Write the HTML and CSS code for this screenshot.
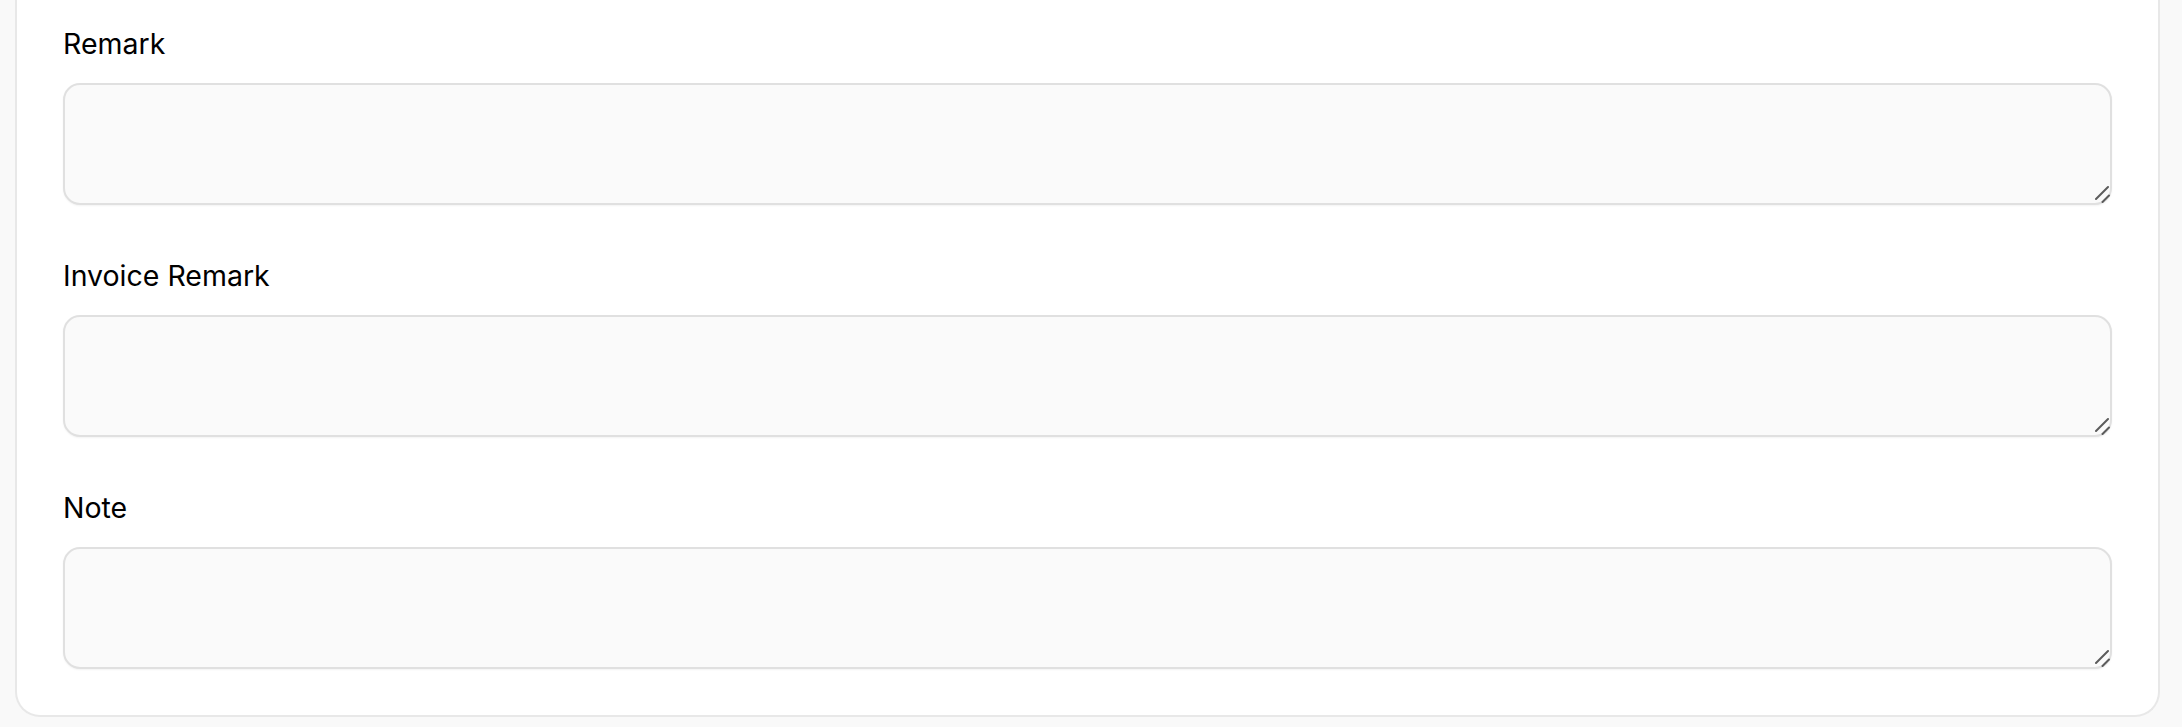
FILE: index.html
```html
<!DOCTYPE html>
<html lang="en">
<head>
<meta charset="utf-8">
<title>Remarks</title>
<link rel="stylesheet" href="styles.css">
</head>
<body>
<div class="card">
  <div class="field">
    <label class="field-label" for="remark">Remark</label>
    <div class="input-wrap">
      <textarea id="remark" class="field-input"></textarea>
      <svg class="grip" width="20" height="20" viewBox="0 0 20 20" aria-hidden="true"><path d="M6 16 L18 4 M12.5 19 L19 12.5" stroke="#5c5c5c" stroke-width="2" stroke-linecap="round" fill="none"/></svg>
    </div>
  </div>
  <div class="field">
    <label class="field-label" for="invoice-remark">Invoice Remark</label>
    <div class="input-wrap">
      <textarea id="invoice-remark" class="field-input"></textarea>
      <svg class="grip" width="20" height="20" viewBox="0 0 20 20" aria-hidden="true"><path d="M6 16 L18 4 M12.5 19 L19 12.5" stroke="#5c5c5c" stroke-width="2" stroke-linecap="round" fill="none"/></svg>
    </div>
  </div>
  <div class="field">
    <label class="field-label" for="note">Note</label>
    <div class="input-wrap">
      <textarea id="note" class="field-input"></textarea>
      <svg class="grip" width="20" height="20" viewBox="0 0 20 20" aria-hidden="true"><path d="M6 16 L18 4 M12.5 19 L19 12.5" stroke="#5c5c5c" stroke-width="2" stroke-linecap="round" fill="none"/></svg>
    </div>
  </div>
</div>
</body>
</html>
```
FILE: styles.css
```css
html, body {
  margin: 0;
  padding: 0;
  background: #f9f9f9;
  font-family: Inter, "Noto Sans", sans-serif;
}

.card {
  margin: 0 22px 10px 15px;
  background: #ffffff;
  border: 2px solid #e8e8e8;
  border-top: none;
  border-radius: 0 0 25px 25px;
  padding: 24px 46px 46px 46px;
  display: flex;
  flex-direction: column;
  gap: 51px;
}

.field {
  display: flex;
  flex-direction: column;
}

.field-label {
  font-size: 28.5px;
  font-weight: 400;
  line-height: 40px;
  color: #000000;
  margin-bottom: 19px;
}

.input-wrap {
  position: relative;
  display: flex;
}

.field-input {
  box-sizing: border-box;
  width: 100%;
  height: 122px;
  margin: 0;
  background: #fafafa;
  border: 2px solid #e0e0e0;
  border-radius: 17px;
  box-shadow: 0 1px 2px rgba(0, 0, 0, 0.05);
  font-family: inherit;
  font-size: 28px;
  outline: none;
  resize: none;
}

.grip {
  position: absolute;
  right: 2px;
  bottom: 2px;
  pointer-events: none;
}
```
